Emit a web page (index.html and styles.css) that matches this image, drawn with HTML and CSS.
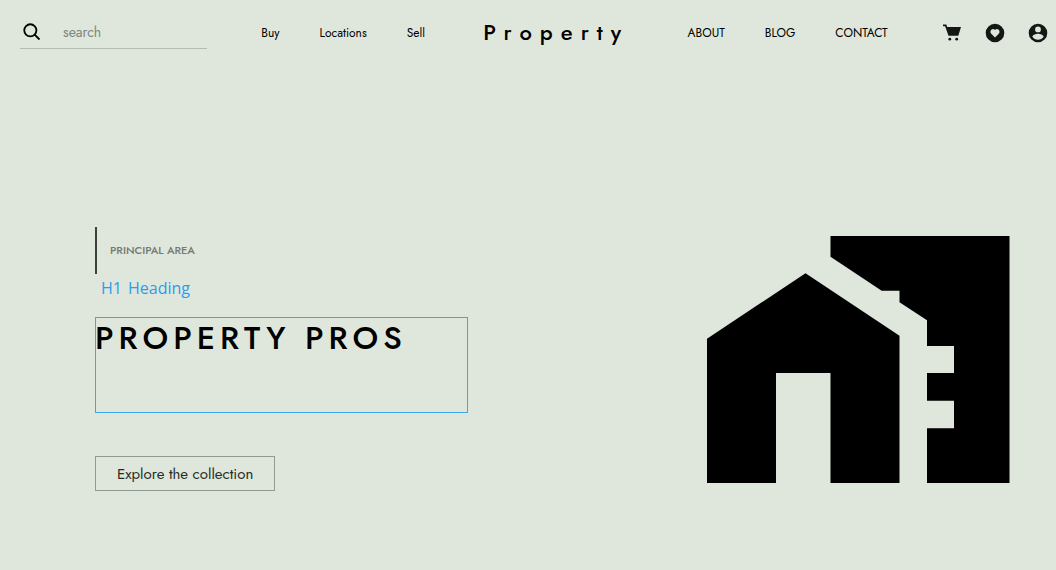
FILE: index.html
```html
<!DOCTYPE html>
<html lang="en">
<head>
<meta charset="utf-8">
<meta name="viewport" content="width=device-width, initial-scale=1">
<title>Property</title>
<link rel="stylesheet" href="styles.css">
</head>
<body>
<header class="header">
  <form class="search" role="search">
    <label class="search-label" for="search" aria-label="Search">
      <svg class="search-icon" viewBox="0 0 24 24" aria-hidden="true"><circle cx="10" cy="10" r="7.3"/><path d="M15.2 15.2L21 21"/></svg>
    </label>
    <input class="search-input" id="search" type="search" placeholder="search">
  </form>
  <nav class="nav" aria-label="Listings">
    <a href="#buy">Buy</a>
    <a href="#locations">Locations</a>
    <a href="#sell">Sell</a>
  </nav>
  <a class="logo" href="#home">Property</a>
  <nav class="nav" aria-label="Site">
    <a href="#about">ABOUT</a>
    <a href="#blog">BLOG</a>
    <a href="#contact">CONTACT</a>
  </nav>
  <div class="actions">
    <button class="icon-button" type="button" aria-label="Cart">
      <svg viewBox="0 0 20 20" aria-hidden="true"><path d="M1 1.500H4.300L5.200 4H19L16.300 12.700H6.500L3.100 3.300H1Z"/><circle cx="7.800" cy="16.200" r="1.400"/><circle cx="14.700" cy="16.200" r="1.400"/></svg>
    </button>
    <button class="icon-button" type="button" aria-label="Favourites">
      <svg viewBox="0 0 20 20" aria-hidden="true"><path fill-rule="evenodd" d="M10 .7a9.300 9.300 0 1 0 0 18.600A9.300 9.300 0 0 0 10 .7ZM10 14.500L6.500 11C3.500 8 7.700 4 10 7C12.300 4 16.500 8 13.500 11Z"/></svg>
    </button>
    <button class="icon-button" type="button" aria-label="Account">
      <svg viewBox="0 0 20 20" aria-hidden="true"><path fill-rule="evenodd" d="M10 .7a9.300 9.300 0 1 0 0 18.600A9.300 9.300 0 0 0 10 .7ZM10 3.500a2.900 2.900 0 1 1 0 5.800a2.900 2.900 0 0 1 0-5.800ZM10 16.700C7.700 16.700 5.600 15.500 4.400 13.700C4.500 11.800 8.100 10.800 10 10.800S15.500 11.800 15.600 13.700C14.400 15.500 12.300 16.700 10 16.700Z"/></svg>
    </button>
  </div>
</header>
<main class="hero">
  <section class="intro">
    <p class="eyebrow">PRINCIPAL AREA</p>
    <div class="tag"><span>H1</span><span>Heading</span></div>
    <h1 class="title">PROPERTY PROS</h1>
    <button class="explore" type="button">Explore the collection</button>
  </section>
  <svg class="house" viewBox="0 0 303 247" role="img" aria-label="House in front of a building">
    <path d="M123.500 0H302.500V247H220V192.300H247V164.700H220V137H247V110H220V84.300L192.500 66.300V54.700H174.700L123.500 20.700Z"/>
    <path d="M98.500 37.300L192.500 99.700V247H123.500V137H69V247H0V102.700Z"/>
  </svg>
</main>
</body>
</html>
```
FILE: styles.css
```css
* {
  box-sizing: border-box;
}

body {
  margin: 0;
  min-height: 100vh;
  background: #dfe7dc;
  color: #000;
  font-family: Jost, Lato, sans-serif;
  font-size: 12px;
}

button,
input {
  font: inherit;
}

.header {
  display: flex;
  align-items: center;
  justify-content: space-between;
  padding: 16px 8px 16px 20px;
}

.search {
  display: flex;
  align-items: center;
  width: 187px;
  height: 33px;
  border-bottom: 1px solid #b5bdb3;
}

.search-label {
  display: flex;
  padding: 0 21px 0 2px;
}

.search-icon {
  width: 20px;
  height: 20px;
  fill: none;
  stroke: #000;
  stroke-width: 2.2;
}

.search-input {
  flex: 1;
  min-width: 0;
  padding: 0;
  border: 0;
  background: transparent;
  font-size: 14px;
}

.search-input::placeholder {
  color: #7d857f;
}

.nav {
  display: flex;
  gap: 40px;
}

.nav a,
.logo {
  color: inherit;
  text-decoration: none;
}

.logo {
  margin: 0 4px;
  padding-bottom: 2px;
  font-size: 22px;
  font-weight: 500;
  letter-spacing: 8px;
  line-height: 30px;
}

.actions {
  display: flex;
  gap: 23px;
}

.icon-button {
  width: 20px;
  height: 20px;
  padding: 0;
  border: 0;
  background: none;
}

.icon-button svg {
  display: block;
  fill: #141714;
}

.hero {
  display: flex;
  align-items: center;
  justify-content: space-between;
  gap: 40px;
  padding: 162px 46px 79px 95px;
}

.intro {
  display: flex;
  flex-direction: column;
  align-items: flex-start;
  flex: 0 1 373px;
}

.eyebrow {
  margin: 0;
  padding: 0 13px;
  border-left: 2px solid #3b423c;
  color: #727a72;
  font-size: 11px;
  font-weight: 500;
  line-height: 47px;
}

.tag {
  display: flex;
  gap: 6px;
  padding: 0 6px;
  margin-bottom: 15px;
  color: #2b9cec;
  font-family: "Open Sans", sans-serif;
  font-size: 16px;
  line-height: 28px;
}

.title {
  width: 100%;
  min-height: 96px;
  margin: 0 0 43px;
  outline: 1px solid #3ea8e6;
  outline-offset: -1px;
  font-size: 32px;
  font-weight: 500;
  line-height: 42px;
  letter-spacing: 5px;
}

.explore {
  padding: 1px 21px 0;
  border: 1px solid #929b91;
  background: transparent;
  color: #262b27;
  font-size: 15px;
  line-height: 32px;
}

.house {
  flex: 0 1 303px;
  min-width: 0;
}
```
